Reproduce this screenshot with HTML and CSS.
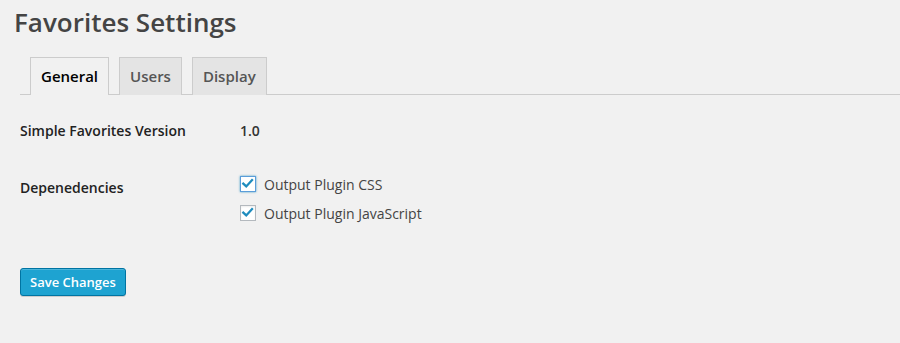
FILE: index.html
```html
<!DOCTYPE html>
<html lang="en">
<head>
<meta charset="utf-8">
<title>Favorites Settings</title>
<link rel="stylesheet" href="styles.css">
</head>
<body>
<div class="wrap">
  <h1 class="page-title">Favorites Settings</h1>
  <nav class="tabs">
    <a class="tab tab-active" href="#">General</a>
    <a class="tab" href="#">Users</a>
    <a class="tab" href="#">Display</a>
  </nav>
  <div class="form">
    <div class="row row-version">
      <div class="label">Simple Favorites Version</div>
      <div class="value version">1.0</div>
    </div>
    <div class="row row-deps">
      <div class="label label-deps">Depenedencies</div>
      <div class="value checks">
        <label class="check-line">
          <span class="checkbox checkbox-focus"><svg viewBox="0 0 16 16" width="14" height="14"><path d="M2.6 7.6 L6 10.8 L12.6 3.6" fill="none" stroke="#1e8cbe" stroke-width="2.6" stroke-linecap="square" stroke-linejoin="miter"/></svg></span>
          <span>Output Plugin CSS</span>
        </label>
        <label class="check-line">
          <span class="checkbox"><svg viewBox="0 0 16 16" width="14" height="14"><path d="M2.6 7.6 L6 10.8 L12.6 3.6" fill="none" stroke="#1e8cbe" stroke-width="2.6" stroke-linecap="square" stroke-linejoin="miter"/></svg></span>
          <span>Output Plugin JavaScript</span>
        </label>
      </div>
    </div>
    <div class="submit">
      <button class="button-primary" type="button">Save Changes</button>
    </div>
  </div>
</div>
</body>
</html>
```

FILE: styles.css
```css
html, body {
  margin: 0;
  padding: 0;
  background: #f1f1f1;
}
body {
  font-family: "Open Sans", "Noto Sans", sans-serif;
  font-size: 14px;
  color: #444;
  height: 343px;
  overflow: hidden;
}
.wrap {
  padding-top: 5px;
}
.page-title {
  margin: 0 0 0 14px;
  font-size: 26px;
  line-height: 34px;
  font-weight: 600;
  color: #444;
}
.tabs {
  display: flex;
  align-items: flex-end;
  gap: 10px;
  margin: 18px 0 0 20px;
  padding-left: 10px;
  border-bottom: 1px solid #ccc;
  height: 37px;
}
.tab {
  display: block;
  box-sizing: border-box;
  height: 38px;
  margin-bottom: -1px;
  padding: 6px 10px;
  border: 1px solid #ccc;
  border-bottom: none;
  background: #e4e4e4;
  color: #555;
  font-size: 15px;
  line-height: 24px;
  font-weight: 600;
  text-decoration: none;
}
.tab-active {
  background: #f1f1f1;
  color: #000;
}
.form {
  margin: 26px 0 0 20px;
}
.row {
  display: flex;
  line-height: 20px;
}
.label {
  width: 220px;
  flex: none;
  font-weight: 600;
  color: #222;
}
.version {
  font-weight: 600;
  color: #333;
}
.row-deps {
  margin-top: 34px;
}
.label-deps {
  padding-top: 3px;
}
.checks {
  display: flex;
  flex-direction: column;
  gap: 9px;
}
.check-line {
  display: flex;
  align-items: flex-start;
  gap: 8px;
  color: #444;
}
.checkbox {
  box-sizing: border-box;
  width: 16px;
  height: 16px;
  margin-top: 1px;
  border: 1px solid #b4b9be;
  background: #fff;
  box-shadow: inset 0 1px 2px rgba(0,0,0,.07);
  display: flex;
  align-items: center;
  justify-content: center;
}
.checkbox-focus {
  border-color: #5b9dd9;
  box-shadow: 0 0 2px rgba(30,140,190,.8);
}
.submit {
  margin-top: 44px;
}
.button-primary {
  box-sizing: border-box;
  height: 28px;
  padding: 0 9px 1px;
  border: 1px solid #0074a2;
  border-radius: 3px;
  background: #1ea3d1;
  box-shadow: inset 0 1px 0 rgba(120,200,230,.5), 0 1px 0 rgba(0,0,0,.15);
  color: #fff;
  font-family: "Open Sans", "Noto Sans", sans-serif;
  font-size: 13px;
  font-weight: 600;
  line-height: 26px;
  cursor: pointer;
}
```
